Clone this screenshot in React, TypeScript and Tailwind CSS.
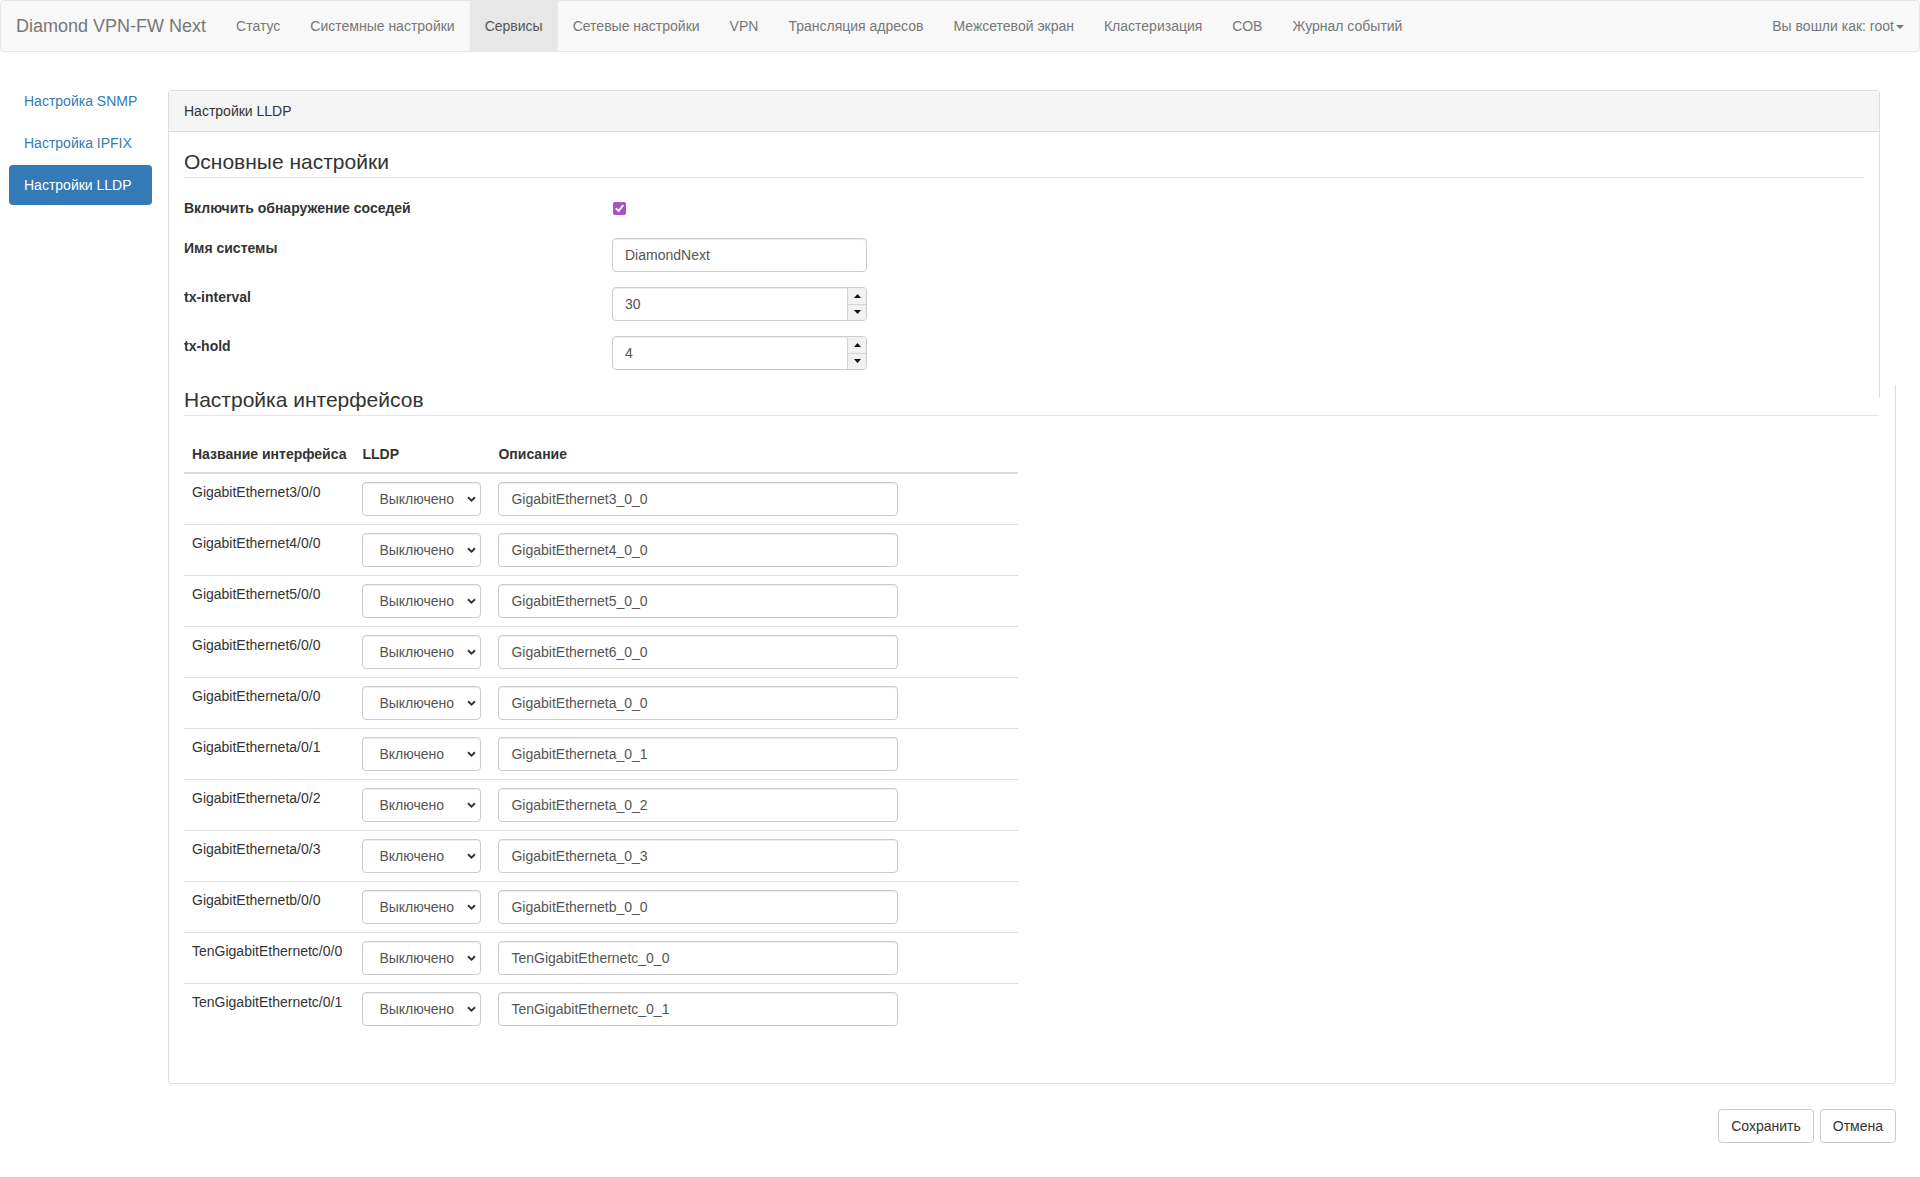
const navItems = [
  'Статус',
  'Системные настройки',
  'Сервисы',
  'Сетевые настройки',
  'VPN',
  'Трансляция адресов',
  'Межсетевой экран',
  'Кластеризация',
  'СОВ',
  'Журнал событий',
];

const sideItems = ['Настройка SNMP', 'Настройка IPFIX', 'Настройки LLDP'];

const interfaces: { name: string; on: boolean }[] = [
  { name: 'GigabitEthernet3/0/0', on: false },
  { name: 'GigabitEthernet4/0/0', on: false },
  { name: 'GigabitEthernet5/0/0', on: false },
  { name: 'GigabitEthernet6/0/0', on: false },
  { name: 'GigabitEtherneta/0/0', on: false },
  { name: 'GigabitEtherneta/0/1', on: true },
  { name: 'GigabitEtherneta/0/2', on: true },
  { name: 'GigabitEtherneta/0/3', on: true },
  { name: 'GigabitEthernetb/0/0', on: false },
  { name: 'TenGigabitEthernetc/0/0', on: false },
  { name: 'TenGigabitEthernetc/0/1', on: false },
];

export default function App() {
  return (
    <div className="min-h-screen w-[1920px] bg-white font-['Liberation_Sans',Arial,sans-serif] text-[14px] leading-[20px] text-[#333]">
      <Navbar />

      <div className="flex">
        <div className="w-[168px] shrink-0 pl-[9px] pt-[29px]">
          <ul className="flex w-[143px] flex-col gap-[2px]">
            {sideItems.map((item, i) => (
              <li
                key={item}
                className={
                  i === 2
                    ? 'whitespace-nowrap rounded-[4px] bg-[#337ab7] px-[15px] py-[10px] text-white'
                    : 'whitespace-nowrap rounded-[4px] px-[15px] py-[10px] text-[#337ab7]'
                }
              >
                {item}
              </li>
            ))}
          </ul>
        </div>

        <div className="flex-1 pr-[24px] pt-[38px]">
          {/* top part of the panel */}
          <div className="mr-[16px] rounded-t-[4px] border-x border-t border-[#ddd]">
            <div className="border-b border-[#ddd] bg-[#f5f5f5] px-[15px] py-[10px]">Настройки LLDP</div>
            <div className="px-[15px] pt-[15px] pb-[13px]">
              <Legend>Основные настройки</Legend>

              <div className="mb-[15px] flex h-[25px]">
                <label className="w-[428px] font-bold">Включить обнаружение соседей</label>
                <div className="pl-[1px] pt-[4px]">
                  <Checkbox />
                </div>
              </div>

              <div className="mb-[15px] flex h-[34px]">
                <label className="w-[428px] font-bold">Имя системы</label>
                <input
                  defaultValue="DiamondNext"
                  className="h-[34px] w-[255px] rounded-[4px] border border-[#ccc] px-[12px] text-[#555] shadow-[inset_0_1px_1px_rgba(0,0,0,0.075)] outline-none"
                />
              </div>

              <div className="mb-[15px] flex h-[34px]">
                <label className="w-[428px] font-bold">tx-interval</label>
                <NumberInput value="30" />
              </div>

              <div className="mb-[15px] flex h-[34px]">
                <label className="w-[428px] font-bold">tx-hold</label>
                <NumberInput value="4" />
              </div>
            </div>
          </div>

          {/* lower part of the panel */}
          <div className="rounded-b-[4px] border-x border-b border-[#ddd] pb-[49px] pl-[15px] pr-[16px]">
            <div className="-mt-[13px]">
              <Legend>Настройка интерфейсов</Legend>
            </div>

            <table className="w-[834px] border-collapse">
              <thead>
                <tr className="border-b-2 border-[#ddd] text-left">
                  <th className="w-[170px] whitespace-nowrap p-[8px] font-bold">Название интерфейса</th>
                  <th className="w-[136px] whitespace-nowrap p-[8px] font-bold">LLDP</th>
                  <th className="p-[8px] font-bold">Описание</th>
                </tr>
              </thead>
              <tbody>
                {interfaces.map((row, i) => (
                  <tr key={row.name} className={i === 0 ? '' : 'border-t border-[#ddd]'}>
                    <td className="whitespace-nowrap p-[8px] align-top">{row.name}</td>
                    <td className="p-[8px] align-top">
                      <Select value={row.on ? 'Включено' : 'Выключено'} />
                    </td>
                    <td className="p-[8px] align-top">
                      <input
                        defaultValue={row.name.replace(/\//g, '_')}
                        className="h-[34px] w-[400px] rounded-[4px] border border-[#ccc] px-[12px] text-[#555] shadow-[inset_0_1px_1px_rgba(0,0,0,0.075)] outline-none"
                      />
                    </td>
                  </tr>
                ))}
              </tbody>
            </table>
          </div>

          <div className="mt-[25px] flex justify-end gap-[6px]">
            <button className="h-[34px] rounded-[4px] border border-[#ccc] bg-white px-[12px] text-[#333]">Сохранить</button>
            <button className="h-[34px] rounded-[4px] border border-[#ccc] bg-white px-[12px] text-[#333]">Отмена</button>
          </div>
        </div>
      </div>
    </div>
  );
}

function Navbar() {
  return (
    <nav className="flex h-[52px] items-stretch rounded-[4px] border border-[#e7e7e7] bg-[#f8f8f8] text-[#777]">
      <div className="whitespace-nowrap px-[15px] py-[15px] text-[18px] leading-[20px]">Diamond VPN-FW Next</div>
      <ul className="flex">
        {navItems.map((item) => (
          <li
            key={item}
            className={
              item === 'Сервисы'
                ? 'whitespace-nowrap bg-[#e7e7e7] px-[15px] py-[15px] text-[#555]'
                : 'whitespace-nowrap px-[15px] py-[15px]'
            }
          >
            {item}
          </li>
        ))}
      </ul>
      <div className="ml-auto flex items-start whitespace-nowrap px-[15px] py-[15px]">
        <span>Вы вошли как: root</span>
        <span className="ml-[2px] mt-[9px] h-0 w-0 border-x-[4px] border-t-[4px] border-x-transparent border-t-[#777]" />
      </div>
    </nav>
  );
}

function Legend({ children }: { children: React.ReactNode }) {
  return (
    <div className="mb-[20px] border-b border-[#e5e5e5] text-[21px] leading-[30px] text-[#333]">{children}</div>
  );
}

function Checkbox() {
  return (
    <div className="flex h-[13px] w-[13px] items-center justify-center rounded-[2px] bg-[#a653c6]">
      <svg width="9" height="9" viewBox="0 0 10 10" fill="none">
        <path d="M1.5 5.2 4 7.8 8.6 2" stroke="white" strokeWidth="2" strokeLinecap="round" strokeLinejoin="round" />
      </svg>
    </div>
  );
}

function NumberInput({ value }: { value: string }) {
  return (
    <div className="flex h-[34px] w-[255px] overflow-hidden rounded-[4px] border border-[#ccc] shadow-[inset_0_1px_1px_rgba(0,0,0,0.075)]">
      <input defaultValue={value} className="min-w-0 flex-1 bg-transparent px-[12px] text-[#555] outline-none" />
      <div className="flex w-[19px] flex-col border-l border-[#d4d4d4] bg-[#f1f1f1]">
        <div className="flex flex-1 items-center justify-center border-b border-[#d4d4d4]">
          <svg width="7" height="4" viewBox="0 0 7 4">
            <path d="M0 4 3.5 0 7 4Z" fill="#111" />
          </svg>
        </div>
        <div className="flex flex-1 items-center justify-center">
          <svg width="7" height="4" viewBox="0 0 7 4">
            <path d="M0 0 3.5 4 7 0Z" fill="#111" />
          </svg>
        </div>
      </div>
    </div>
  );
}

function Select({ value }: { value: string }) {
  return (
    <div className="relative w-[119px]">
      <select
        defaultValue={value}
        className="h-[34px] w-[119px] appearance-none rounded-[4px] border border-[#ccc] bg-white pl-[16px] pr-[20px] text-[#555] shadow-[inset_0_1px_1px_rgba(0,0,0,0.075)] outline-none"
      >
        <option>Выключено</option>
        <option>Включено</option>
      </select>
      <svg
        className="pointer-events-none absolute right-[5px] top-[14px]"
        width="9"
        height="6"
        viewBox="0 0 9 6"
        fill="none"
      >
        <path d="M1 1.2 4.5 4.6 8 1.2" stroke="#333" strokeWidth="1.9" />
      </svg>
    </div>
  );
}
